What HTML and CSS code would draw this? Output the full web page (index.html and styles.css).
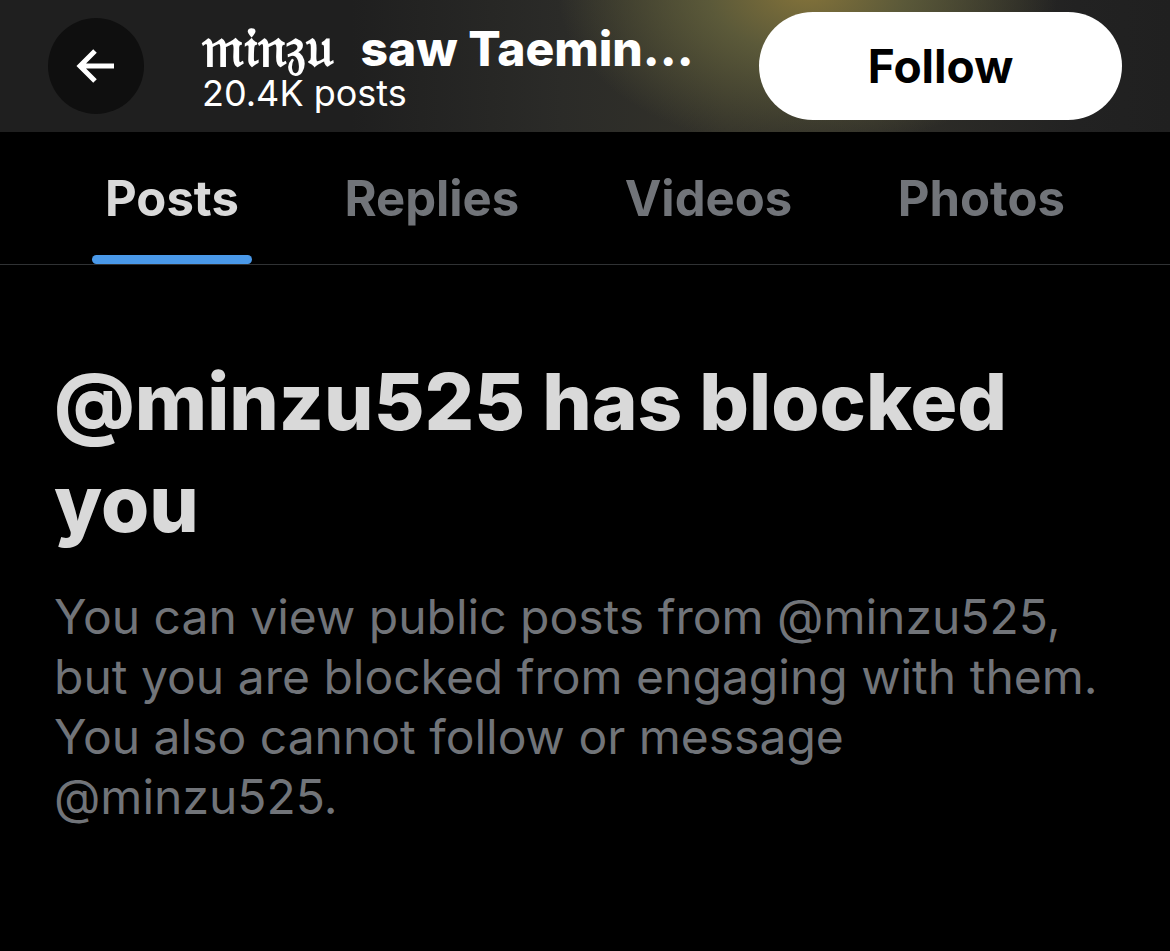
FILE: index.html
```html
<!DOCTYPE html>
<html lang="en">
<head>
<meta charset="utf-8">
<meta name="viewport" content="width=device-width, initial-scale=1">
<title>Profile</title>
<link rel="stylesheet" href="styles.css">
</head>
<body>
<header class="topbar">
  <button class="back" type="button" aria-label="Back">
    <svg viewBox="0 0 40 36" width="40" height="36" aria-hidden="true"><path d="M38 18H5M19 3L4 18l15 15" fill="none" stroke="currentColor" stroke-width="5"/></svg>
  </button>
  <div class="identity">
    <h1 class="name"><span class="fancy">𝔪𝔦𝔫𝔷𝔲</span> saw Taemin...</h1>
    <p class="count">20.4K posts</p>
  </div>
  <button class="follow" type="button">Follow</button>
</header>
<nav class="tabs" aria-label="Profile sections">
  <a class="tab active" href="#posts" aria-current="page">Posts</a>
  <a class="tab" href="#replies">Replies</a>
  <a class="tab" href="#videos">Videos</a>
  <a class="tab" href="#photos">Photos</a>
</nav>
<main class="notice">
  <h2 class="title">@minzu525 has blocked you</h2>
  <p class="message">You can view public posts from @minzu525, but you are blocked from engaging with them. You also cannot follow or message @minzu525.</p>
</main>
</body>
</html>
```
FILE: styles.css
```css
* { box-sizing: border-box; }
body { margin: 0; background: #000; color: #d9d9d9; font-family: Inter, "Liberation Sans", sans-serif; }
h1, h2, p { margin: 0; }
button { border: 0; padding: 0; font: inherit; }
.topbar {
  display: flex;
  align-items: center;
  height: 132px;
  padding: 0 48px;
  background:
    radial-gradient(ellipse 250px 160px at 69% -10px, #84733a, #65633dcc 40%, #4a483000),
    linear-gradient(90deg, #1f1f1f 30%, #2b2b28 48%, #33322a 62%, #302f29 75%, #222 92%, #202020);
}
.back { display: grid; place-items: center; flex: none; width: 96px; height: 96px; border-radius: 50%; background: #0f0f0f; color: #fff; }
.identity { flex: 1; min-width: 0; padding-left: 58px; color: #fff; }
.name { font-size: 48px; line-height: 52px; font-weight: 800; white-space: nowrap; }
.fancy { margin-right: 16px; font-family: "DejaVu Serif", "DejaVu Sans", serif; font-size: 56px; line-height: 48px; font-weight: 700; }
.count { font-size: 36px; line-height: 36px; }
.follow { flex: none; width: 363px; height: 108px; border-radius: 54px; background: #fff; color: #000; font-size: 46px; font-weight: 700; }
.tabs { display: flex; justify-content: space-between; height: 133px; padding: 0 92px; border-bottom: 1px solid #303234; }
.tab { position: relative; display: flex; align-items: center; padding: 0 13px; color: #717479; font-size: 49px; font-weight: 700; text-decoration: none; }
.active { color: #d9d9d9; }
.active::after { content: ""; position: absolute; left: 0; right: 0; bottom: 0; height: 9px; border-radius: 5px; background: #4a99e9; }
.notice { padding: 86px 54px; }
.title { font-size: 78px; line-height: 102px; font-weight: 800; }
.message { margin-top: 32px; color: #717479; font-size: 48px; line-height: 60px; }
```
